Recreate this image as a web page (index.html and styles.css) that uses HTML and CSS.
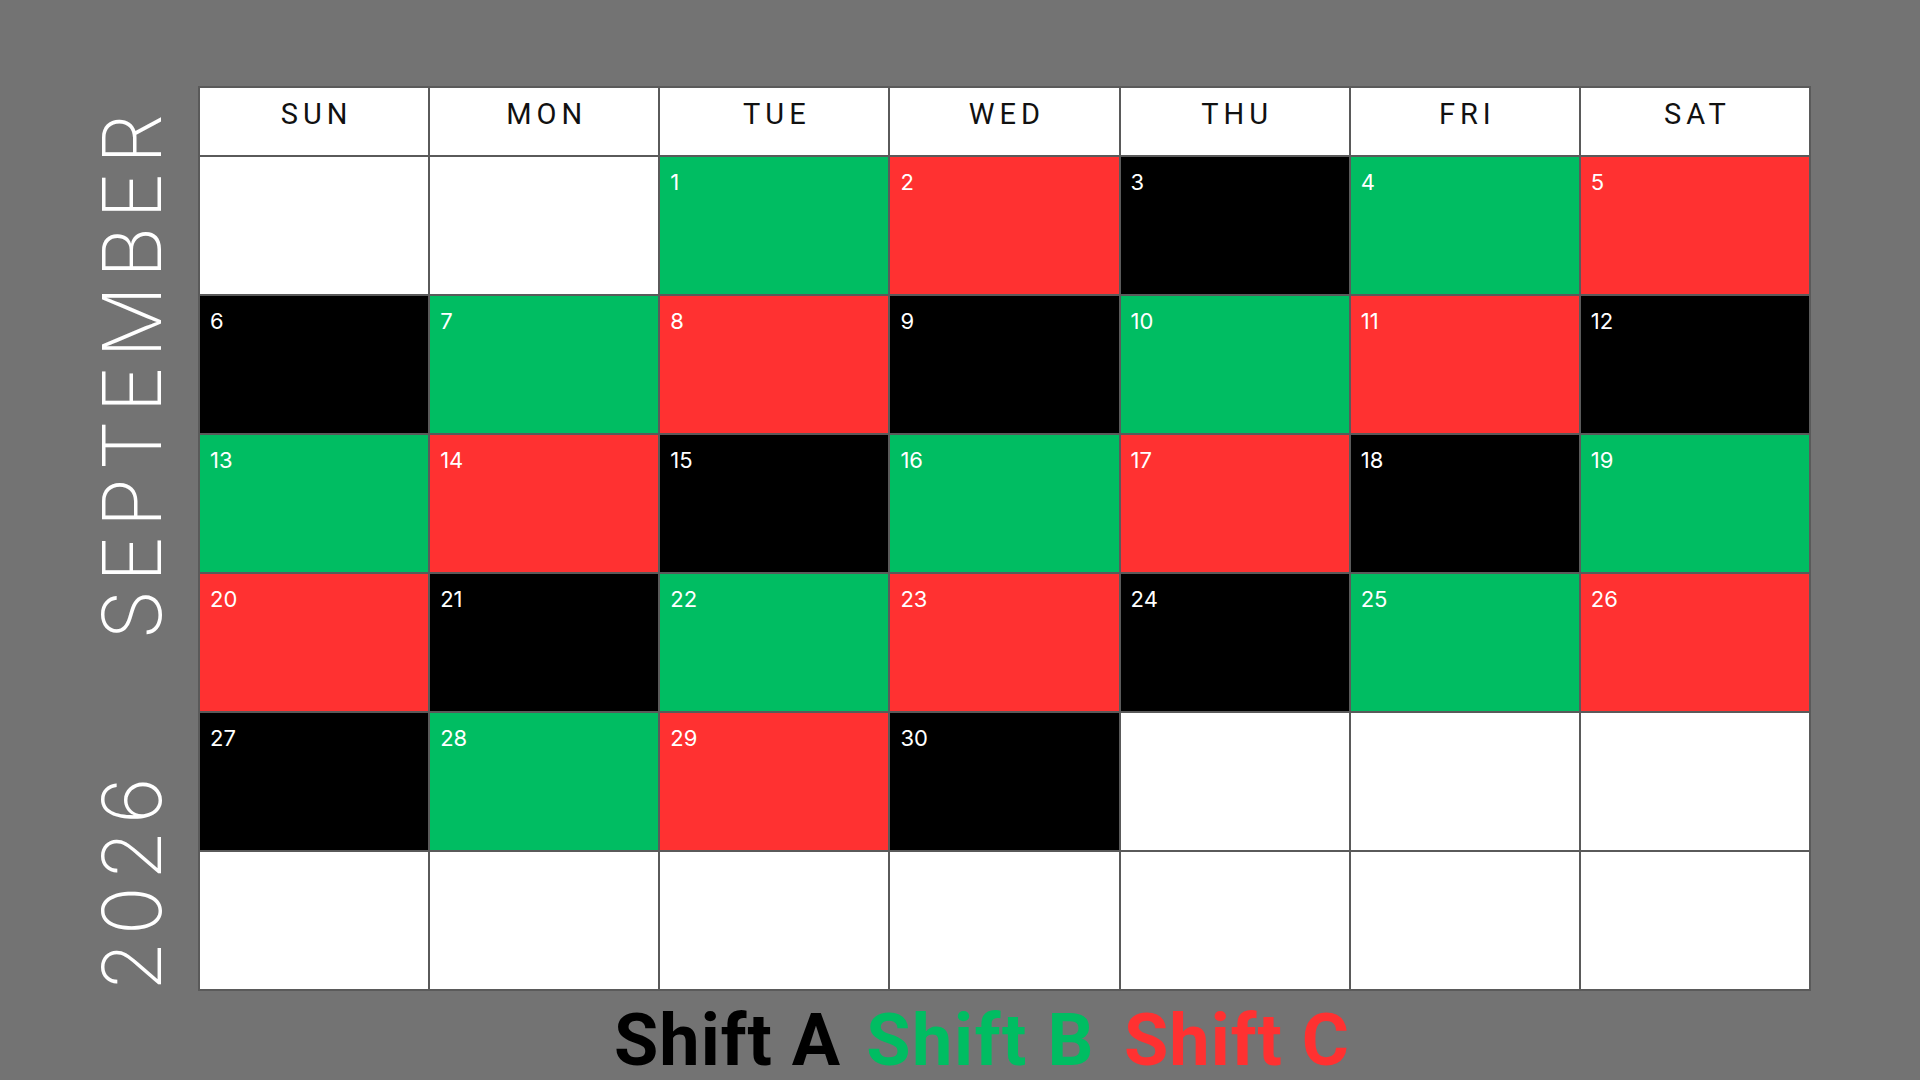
FILE: index.html
```html
<!DOCTYPE html>
<html lang="en">
<head>
<meta charset="utf-8">
<title>September 2026</title>
<link rel="stylesheet" href="styles.css">
</head>
<body>
<div class="page">
  <div class="main">
    <div class="side">
      <div class="vtext month">SEPTEMBER</div>
      <div class="vtext year">2026</div>
    </div>
    <div class="calendar">
      <div class="dow">SUN</div><div class="dow">MON</div><div class="dow">TUE</div><div class="dow">WED</div><div class="dow">THU</div><div class="dow">FRI</div><div class="dow">SAT</div>

      <div class="cell"></div><div class="cell"></div><div class="cell g">1</div><div class="cell r">2</div><div class="cell k">3</div><div class="cell g">4</div><div class="cell r">5</div>
      <div class="cell k">6</div><div class="cell g">7</div><div class="cell r">8</div><div class="cell k">9</div><div class="cell g">10</div><div class="cell r">11</div><div class="cell k">12</div>
      <div class="cell g">13</div><div class="cell r">14</div><div class="cell k">15</div><div class="cell g">16</div><div class="cell r">17</div><div class="cell k">18</div><div class="cell g">19</div>
      <div class="cell r">20</div><div class="cell k">21</div><div class="cell g">22</div><div class="cell r">23</div><div class="cell k">24</div><div class="cell g">25</div><div class="cell r">26</div>
      <div class="cell k">27</div><div class="cell g">28</div><div class="cell r">29</div><div class="cell k">30</div><div class="cell"></div><div class="cell"></div><div class="cell"></div>
      <div class="cell"></div><div class="cell"></div><div class="cell"></div><div class="cell"></div><div class="cell"></div><div class="cell"></div><div class="cell"></div>
    </div>
  </div>
  <div class="legend">
    <span class="shift shift-a">Shift A</span>
    <span class="shift shift-b">Shift B</span>
    <span class="shift shift-c">Shift C</span>
  </div>
</div>
</body>
</html>
```
FILE: styles.css
```css
html, body {
  margin: 0;
  padding: 0;
  background: #737373;
}
body {
  width: 1920px;
  height: 1080px;
  overflow: hidden;
  font-family: "Inter", "Roboto", sans-serif;
}
.page {
  padding-top: 86px;
}
.main {
  display: flex;
  align-items: stretch;
}
.side {
  width: 198px;
  flex: none;
  display: flex;
  flex-direction: column;
  justify-content: space-between;
  align-items: center;
  padding-top: 21px;
  padding-bottom: 0;
  box-sizing: border-box;
  padding-left: 66px;
}
.vtext {
  writing-mode: vertical-rl;
  transform: rotate(180deg);
  color: #fff;
  font-family: "Inter", sans-serif;
  font-weight: 200;
  font-size: 81px;
  line-height: 81px;
  letter-spacing: 7px;
}
.year {
  letter-spacing: 6px;
}
.calendar {
  width: 1613px;
  display: grid;
  grid-template-columns: repeat(7, 1fr);
  grid-template-rows: 67px repeat(6, 137px);
  gap: 2px;
  padding: 2px;
  box-sizing: border-box;
  background: #5a5a5a;
}
.dow {
  background: #fff;
  color: #111;
  font-family: "Roboto", sans-serif;
  font-size: 29px;
  line-height: 29px;
  letter-spacing: 5px;
  text-align: center;
  padding-top: 12px;
  padding-left: 5px;
  box-sizing: border-box;
}
.cell {
  background: #fff;
  color: #fff;
  font-family: "Inter", sans-serif;
  font-size: 22px;
  line-height: 22px;
  padding: 14px 0 0 10px;
  box-sizing: border-box;
}
.cell.g { background: #00bd62; }
.cell.r { background: #ff3131; }
.cell.k { background: #000; }
.legend {
  display: flex;
  gap: 25px;
  padding-left: 614px;
  margin-top: 14px;
}
.shift {
  font-family: "Roboto", sans-serif;
  font-weight: 700;
  font-size: 72px;
  line-height: 72px;
  letter-spacing: 1px;
}
.shift-a { color: #000; }
.shift-b { color: #00bd62; letter-spacing: 1.6px; }
.shift-c { color: #ff3131; margin-left: 4px; }
```
